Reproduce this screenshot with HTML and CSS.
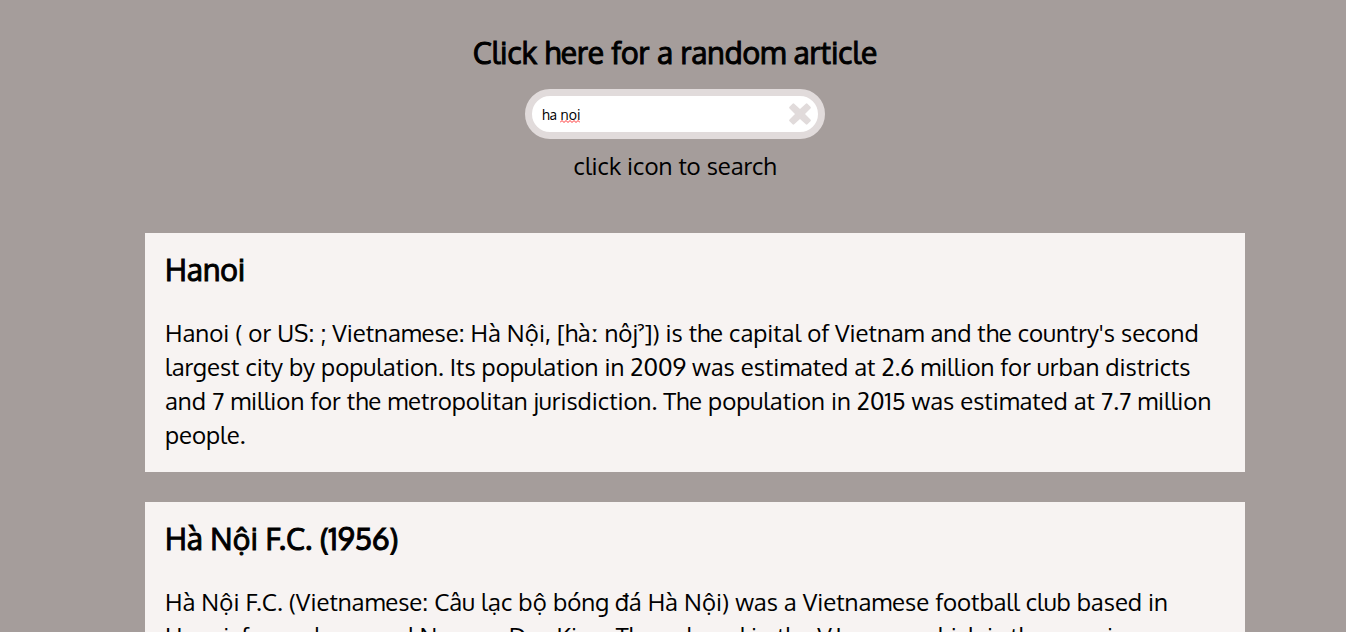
FILE: index.html
```html
<!DOCTYPE html>
<html lang="en">
<head>
<meta charset="utf-8">
<title>Wikipedia Viewer</title>
<link rel="stylesheet" href="styles.css">
</head>
<body>
<main class="page">
  <header class="header">
    <h1 class="random"><a class="random-link" href="#random">Click here for a random article</a></h1>
    <form class="search">
      <input class="search-input" id="query" type="text" value="ha noi" aria-label="Search articles" spellcheck="false" autocomplete="off">
      <svg class="squiggle" width="20" height="3" viewBox="0 0 20 3" aria-hidden="true"><path d="M0 2.5 2 .5 4 2.5 6 .5 8 2.5 10 .5 12 2.5 14 .5 16 2.5 18 .5 20 2.5" fill="none" stroke="#f33"/></svg>
      <button class="clear" type="reset" aria-label="Clear search">
        <svg width="22" height="22" viewBox="0 0 22 22" aria-hidden="true"><path d="M4.4 1.6 11 7.6 17.6 1.6 20.6 4.6 14.4 11 20.6 17.4 17.6 20.4 11 14.4 4.4 20.4 1.4 17.4 7.6 11 1.4 4.6Z" fill="#e1dbdb" stroke="#e1dbdb" stroke-width="2.4" stroke-linejoin="round"/></svg>
      </button>
    </form>
    <p class="hint">click icon to search</p>
  </header>
  <ul class="results">
    <li class="card">
      <h2 class="card-title">Hanoi</h2>
      <p class="card-text">Hanoi ( or US: ; Vietnamese: Hà Nội, [hàː nôjˀ]) is the capital of Vietnam and the country's second largest city by population. Its population in 2009 was estimated at 2.6 million for urban districts and 7 million for the metropolitan jurisdiction. The population in 2015 was estimated at 7.7 million people.</p>
    </li>
    <li class="card">
      <h2 class="card-title">Hà Nội F.C. (1956)</h2>
      <p class="card-text">Hà Nội F.C. (Vietnamese: Câu lạc bộ bóng đá Hà Nội) was a Vietnamese football club based in Hanoi, formerly named Nguyen Duc Kien. They played in the V.League which is the premier</p>
    </li>
  </ul>
</main>
</body>
</html>
```
FILE: styles.css
```css
* { box-sizing: border-box; }

html { overflow: hidden; }

body {
  margin: 0;
  padding-left: 4px;
  background: #a59d9b;
  color: #000;
  font-family: Oxygen, "Open Sans", "Noto Sans", sans-serif;
  font-size: 24px;
  line-height: 34px;
}

.page {
  max-width: 1140px;
  margin: 0 auto;
}

.header {
  display: flex;
  flex-direction: column;
  align-items: center;
  padding-top: 31px;
}

.random,
.card-title {
  margin: 0;
  font-size: 30px;
  font-weight: 400;
  line-height: 42px;
  -webkit-text-stroke: 1px #000;
}

.random-link {
  color: inherit;
  text-decoration: none;
}

.search {
  position: relative;
  width: 300px;
  margin-top: 16px;
}

.search-input {
  display: block;
  width: 100%;
  height: 50px;
  padding: 0 50px 0 10px;
  border: 7px solid #e1dbdb;
  border-radius: 25px;
  background: #fff;
  color: #000;
  font: 14px/20px Oxygen, "Open Sans", sans-serif;
  outline: none;
}

.squiggle {
  position: absolute;
  left: 35px;
  top: 31px;
}

.clear {
  position: absolute;
  right: 14px;
  top: 14px;
  padding: 0;
  border: 0;
  background: none;
  line-height: 0;
  cursor: pointer;
}

.hint { margin: 10px 0 0; }

.results {
  display: grid;
  gap: 30px;
  margin: 50px 0 0;
  padding: 0 0 0 40px;
  list-style: none;
}

.card {
  padding: 15px 20px 20px;
  background: #f7f3f2;
}

.card-title { margin-bottom: 26px; }

.card-text { margin: 0; }
```
